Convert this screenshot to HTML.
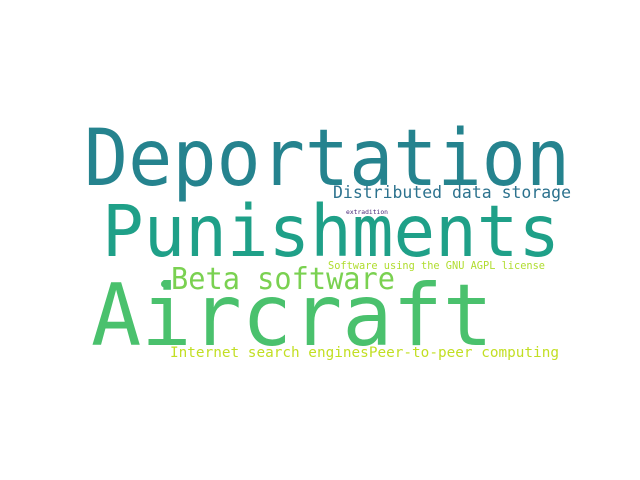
<!DOCTYPE html>
<html><head><style>html,body{margin:0;padding:0;background:#fff;width:640px;height:480px;overflow:hidden}</style></head>
<body>
<svg width="640" height="480" xmlns="http://www.w3.org/2000/svg" style="font-family:'DejaVu Sans Mono','Liberation Mono',monospace">
<rect width="640" height="480" fill="#fff"/>
<text x="84" y="185" font-size="78" fill="#25838e" textLength="486" lengthAdjust="spacingAndGlyphs">Deportation</text>
<text x="333" y="198" font-size="17" fill="#2c728e" textLength="238" lengthAdjust="spacingAndGlyphs">Distributed data storage</text>
<text x="346" y="214" font-size="6.4" fill="#482878" textLength="42" lengthAdjust="spacingAndGlyphs">extradition</text>
<text x="102" y="256" font-size="71" fill="#1fa088" textLength="458" lengthAdjust="spacingAndGlyphs">Punishments</text>
<text x="328" y="269" font-size="10.5" fill="#b0dd2f" textLength="217" lengthAdjust="spacingAndGlyphs">Software using the GNU AGPL license</text>
<text x="171" y="289" font-size="30" fill="#7ad151" textLength="224" lengthAdjust="spacingAndGlyphs">Beta software</text>
<circle cx="164.5" cy="284" r="3.5" fill="#4ac16d"/>
<text x="91" y="345" font-size="86" fill="#4ac16d" textLength="402" lengthAdjust="spacingAndGlyphs">Aircraft</text>
<text x="170" y="357" font-size="14.5" fill="#c2df23" textLength="389" lengthAdjust="spacingAndGlyphs">Internet search enginesPeer-to-peer computing</text>
</svg>
</body></html>
